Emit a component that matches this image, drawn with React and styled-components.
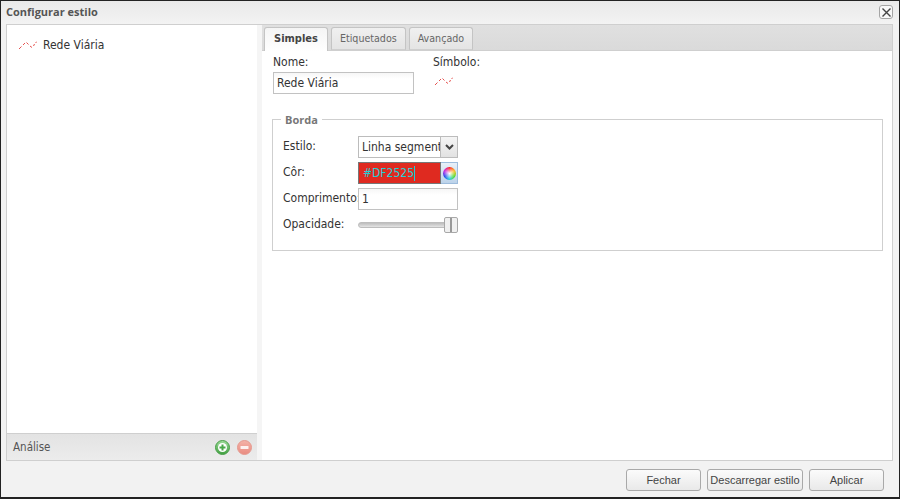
import React from 'react';
import styled, { createGlobalStyle } from 'styled-components';

const GlobalStyle = createGlobalStyle`
  html, body { margin: 0; padding: 0; background: #f2f2f2; }
  * { box-sizing: border-box; }
`;

const LineSymbol = ({ className }) => (
  <svg className={className} width="18" height="9" viewBox="0 0 18 9" fill="none" stroke="#e2403c" strokeWidth="0.9">
    <path d="M0 8 L2.500 5.500" />
    <path d="M4 4 L6 2" />
    <path d="M7.500 1.500 L9.500 3.500" />
    <path d="M11 5 L13 6.500" />
    <path d="M14.500 5 L15.500 3" />
    <path d="M16.500 2 L18 0.500" />
  </svg>
);

const RoundIcon = ({ top, bottom, edge, minus }) => (
  <svg width="15" height="15" viewBox="0 0 15 15">
    <defs>
      <linearGradient id={`g${top.slice(1)}`} x1="0" y1="0" x2="0" y2="1">
        <stop offset="0" stopColor={top} />
        <stop offset="1" stopColor={bottom} />
      </linearGradient>
    </defs>
    <circle cx="7.500" cy="7.500" r="7" fill={`url(#g${top.slice(1)})`} stroke={edge} />
    {minus
      ? <rect x="3.500" y="6" width="8" height="3" rx="0.500" fill="#fff" fillOpacity="0.85" />
      : (
        <>
          <circle cx="7.500" cy="7.500" r="4.500" fill="#fff" />
          <path d="M6.500 4.500h2v2H10.500v2H8.500v2h-2v-2H4.500v-2h2z" fill="#4aa84a" />
        </>
      )}
  </svg>
);

export default function App() {
  return (
    <>
      <GlobalStyle />
      <Window>
        <TitleBar>
          <Title>Configurar estilo</Title>
          <CloseButton>
            <svg width="9" height="9" viewBox="0 0 9 9" stroke="#444" strokeWidth="1.4">
              <path d="M0.500 0.500 L8.500 8.500 M8.500 0.500 L0.500 8.500" />
            </svg>
          </CloseButton>
        </TitleBar>
        <Body>
          <SidePanel>
            <RuleList>
              <RuleItem>
                <LineSymbol />
                <span>Rede Viária</span>
              </RuleItem>
            </RuleList>
            <SideFooter>
              <span>Análise</span>
              <IconRow>
                <RoundIcon top="#9fdc9b" bottom="#3f9f3f" edge="#4a9f4a" />
                <RoundIcon top="#f4b3a8" bottom="#e98b80" edge="#e59a90" minus />
              </IconRow>
            </SideFooter>
          </SidePanel>
          <Splitter />
          <MainPanel>
            <TabStrip>
              <Tab $active>Simples</Tab>
              <Tab>Etiquetados</Tab>
              <Tab>Avançado</Tab>
            </TabStrip>
            <TabBody>
              <TopFields>
                <NameField>
                  <FieldLabel>Nome:</FieldLabel>
                  <TextBox $width={141} $height={22}>Rede Viária</TextBox>
                </NameField>
                <SymbolField>
                  <FieldLabel>Símbolo:</FieldLabel>
                  <SymbolSlot><LineSymbol /></SymbolSlot>
                </SymbolField>
              </TopFields>
              <Fieldset>
                <Legend>Borda</Legend>
                <FormRow>
                  <RowLabel>Estilo:</RowLabel>
                  <Combo>
                    <ComboText>Linha segmentada</ComboText>
                    <ComboArrow>
                      <svg width="9" height="6" viewBox="0 0 9 6" fill="none" stroke="#444" strokeWidth="2">
                        <path d="M1 1 L4.500 4.500 L8 1" />
                      </svg>
                    </ComboArrow>
                  </Combo>
                </FormRow>
                <FormRow>
                  <RowLabel>Côr:</RowLabel>
                  <ColorBox>
                    <ColorValue>#DF2525<Caret /></ColorValue>
                    <WheelButton><WheelDisc /></WheelButton>
                  </ColorBox>
                </FormRow>
                <FormRow>
                  <RowLabel>Comprimento:</RowLabel>
                  <TextBox $width={100} $height={22}>1</TextBox>
                </FormRow>
                <FormRow>
                  <RowLabel>Opacidade:</RowLabel>
                  <Slider>
                    <SliderThumb />
                  </Slider>
                </FormRow>
              </Fieldset>
            </TabBody>
          </MainPanel>
        </Body>
        <Footer>
          <ActionButton $width={75}>Fechar</ActionButton>
          <ActionButton $width={96}>Descarregar estilo</ActionButton>
          <ActionButton $width={75}>Aplicar</ActionButton>
        </Footer>
      </Window>
    </>
  );
}

const Window = styled.div`
  width: 900px;
  height: 499px;
  display: flex;
  flex-direction: column;
  background: #f2f2f2;
  border: 1px solid #222;
  border-bottom-width: 2px;
  font-family: "DejaVu Sans", "Noto Sans", sans-serif;
  font-stretch: condensed;
  font-size: 12px;
  color: #333;
`;

const TitleBar = styled.div`
  height: 23px;
  flex: none;
  display: flex;
  align-items: center;
  justify-content: space-between;
  padding: 0 6px 2px 5px;
  background: linear-gradient(#e9e9e9, #f3f3f3);
`;

const Title = styled.div`
  font-family: "Open Sans", sans-serif;
  font-stretch: normal;
  font-size: 11px;
  font-weight: 700;
  color: #555;
`;

const CloseButton = styled.div`
  width: 14px;
  height: 14px;
  margin-top: 1px;
  display: flex;
  align-items: center;
  justify-content: center;
  background: #f8f8f8;
  border: 1px solid #a5a5a5;
  border-radius: 3px;
`;

const Body = styled.div`
  flex: 1;
  display: flex;
  margin: 0 6px 0 5px;
  border: 1px solid #cfcfcf;
  min-height: 0;
`;

const SidePanel = styled.div`
  width: 250px;
  flex: none;
  display: flex;
  flex-direction: column;
  background: #fff;
`;

const RuleList = styled.div`
  flex: 1;
  padding: 10px 12px;
`;

const RuleItem = styled.div`
  display: flex;
  align-items: center;
  gap: 6px;
  height: 20px;
  color: #333;
`;

const SideFooter = styled.div`
  height: 27px;
  flex: none;
  display: flex;
  align-items: center;
  justify-content: space-between;
  padding: 0 5px 0 6px;
  background: linear-gradient(#e3e3e3, #ececec);
  border-top: 1px solid #cfcfcf;
  font-size: 11.500px;
  color: #555;
`;

const IconRow = styled.div`
  display: flex;
  gap: 7px;
`;

const Splitter = styled.div`
  width: 5px;
  flex: none;
  background: #f5f5f5;
`;

const MainPanel = styled.div`
  flex: 1;
  display: flex;
  flex-direction: column;
  background: #fff;
  min-width: 0;
`;

const TabStrip = styled.div`
  height: 26px;
  flex: none;
  display: flex;
  align-items: flex-end;
  gap: 3px;
  padding-left: 2px;
  background: linear-gradient(#e0e0e0, #dadada);
  border-bottom: 1px solid #cfcfcf;
`;

const Tab = styled.div`
  height: ${p => (p.$active ? '24px' : '23px')};
  margin-bottom: ${p => (p.$active ? '-1px' : '0')};
  padding: 0 ${p => (p.$active ? '9px 2px' : '8px 2px')};
  display: flex;
  align-items: center;
  font-size: ${p => (p.$active ? '11px' : '10.600px')};
  font-weight: ${p => (p.$active ? 700 : 400)};
  color: ${p => (p.$active ? '#444' : '#666')};
  background: ${p => (p.$active ? 'linear-gradient(#f4f4f4, #fff)' : 'linear-gradient(#f0f0f0, #e4e4e4)')};
  border: 1px solid #c4c4c4;
  border-bottom: ${p => (p.$active ? 'none' : '1px solid #cfcfcf')};
  border-radius: 3px 3px 0 0;
`;

const TabBody = styled.div`
  flex: 1;
  padding: 3px 10px 0;
`;

const TopFields = styled.div`
  display: flex;
  gap: 19px;
  padding-left: 1px;
`;

const NameField = styled.div`
  display: flex;
  flex-direction: column;
`;

const SymbolField = styled.div`
  display: flex;
  flex-direction: column;
`;

const FieldLabel = styled.div`
  height: 18px;
  line-height: 16px;
  color: #333;
`;

const SymbolSlot = styled.div`
  padding: 5px 2px;
  line-height: 0;
`;

const TextBox = styled.div`
  width: ${p => p.$width}px;
  height: ${p => p.$height}px;
  display: flex;
  align-items: center;
  padding-left: 3px;
  background: linear-gradient(#f6f6f6, #fff 30%);
  border: 1px solid #c2c2c2;
  color: #333;
`;

const Fieldset = styled.div`
  position: relative;
  margin-top: 25px;
  width: 611px;
  height: 132px;
  padding: 16px 10px 0;
  border: 1px solid #cfcfcf;
`;

const Legend = styled.div`
  position: absolute;
  top: -8px;
  left: 8px;
  padding: 0 4px;
  background: #fff;
  font-family: "Open Sans", sans-serif;
  font-stretch: normal;
  font-size: 11px;
  font-weight: 700;
  color: #777;
  line-height: 15px;
`;

const FormRow = styled.div`
  display: flex;
  align-items: center;
  height: 22px;
  margin-bottom: 4px;
`;

const RowLabel = styled.div`
  width: 75px;
  flex: none;
  padding-bottom: 2px;
  color: #333;
  white-space: nowrap;
`;

const Combo = styled.div`
  width: 100px;
  height: 22px;
  display: flex;
  border: 1px solid #bcbcbc;
  background: #fff;
`;

const ComboText = styled.div`
  width: 81px;
  padding: 0 2px 0 3px;
  line-height: 20px;
  overflow: hidden;
  white-space: nowrap;
`;

const ComboArrow = styled.div`
  flex: 1;
  display: flex;
  align-items: center;
  justify-content: center;
  background: linear-gradient(#f5f5f5, #e2e2e2);
  border-left: 1px solid #bcbcbc;
`;

const ColorBox = styled.div`
  width: 100px;
  height: 22px;
  display: flex;
`;

const ColorValue = styled.div`
  width: 83px;
  display: flex;
  align-items: center;
  padding-left: 4px;
  background: #df2a20;
  border: 1px solid #777;
  color: #1fd0d8;
`;

const Caret = styled.span`
  display: inline-block;
  width: 1px;
  height: 15px;
  background: #1fd0d8;
`;

const WheelButton = styled.div`
  flex: 1;
  display: flex;
  align-items: center;
  justify-content: center;
  background: linear-gradient(#e8f0f8, #bcd3ea);
  border: 1px solid #9dbcdc;
  border-left: none;
`;

const WheelDisc = styled.div`
  width: 13px;
  height: 13px;
  border-radius: 50%;
  background:
    radial-gradient(circle, #fff 0, rgba(255,255,255,0) 65%),
    conic-gradient(#f22, #fb2, #5d2, #2cd, #24e, #c2d, #f22);
`;

const Slider = styled.div`
  position: relative;
  width: 100px;
  height: 6px;
  background: linear-gradient(#bdbdbd, #e4e4e4);
  border: 1px solid #bdbdbd;
  border-radius: 3px;
`;

const SliderThumb = styled.div`
  position: absolute;
  right: -1px;
  top: -6px;
  width: 14px;
  height: 16px;
  background: linear-gradient(90deg, #f0f0f0 40%, #999 40%, #999 55%, #f0f0f0 55%);
  border: 1px solid #a8a8a8;
  border-radius: 2px;
`;

const Footer = styled.div`
  height: 36px;
  flex: none;
  display: flex;
  justify-content: flex-end;
  align-items: center;
  gap: 6px;
  padding: 1px 15px 0 0;
`;

const ActionButton = styled.div`
  width: ${p => p.$width}px;
  height: 22px;
  display: flex;
  align-items: center;
  justify-content: center;
  font-family: "Liberation Sans", Arial, sans-serif;
  font-stretch: normal;
  font-size: 11px;
  white-space: nowrap;
  color: #444;
  background: linear-gradient(#fbfbfb, #e9e9e9);
  border: 1px solid #a9a9a9;
  border-radius: 3px;
`;
